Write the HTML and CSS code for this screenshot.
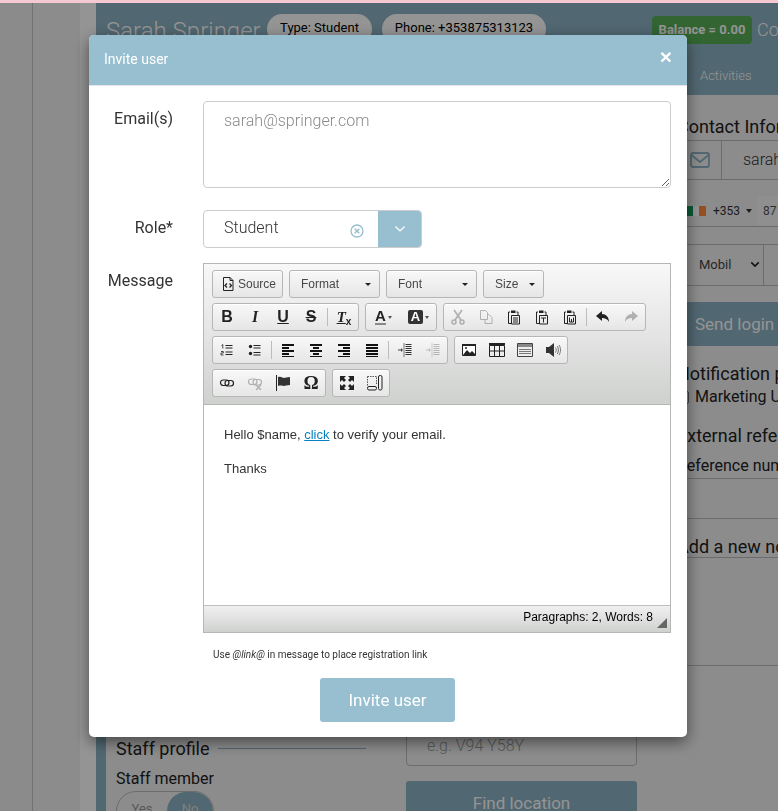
FILE: index.html
```html
<!DOCTYPE html>
<html lang="en">
<head>
<meta charset="utf-8">
<title>Invite user</title>
<link rel="stylesheet" href="styles.css">
</head>
<body>
<svg class="sprite" aria-hidden="true">
  <symbol id="i-source" viewBox="0 0 16 16"><path d="M3.5 1.5h6.5l3 3v10h-9.5z" fill="none" stroke="#222"/><path d="M10 1.5v3h3" fill="none" stroke="#222"/><path d="M7 7.5l-2 2 2 2M9.500 7.500l2 2-2 2" fill="none" stroke="#222" stroke-width="1.300"/></symbol>
  <symbol id="i-ol" viewBox="0 0 16 16"><path d="M2.500 3.500l1.300-1v4M2 9.500h2.300v1.500h-2.300v2h2.500" fill="none" stroke="#333" stroke-width=".9"/><path d="M6.500 3h7v1h-7zM6.500 5.500h7v1h-7zM6.500 9.500h7v1h-7zM6.500 12h7v1h-7z" fill="#222"/></symbol>
  <symbol id="i-ul" viewBox="0 0 16 16"><circle cx="3.500" cy="4.500" r="1.700" fill="#222"/><circle cx="3.500" cy="11.500" r="1.700" fill="#222"/><path d="M6.500 3h7v1h-7zM6.500 5.500h7v1h-7zM6.500 10h7v1h-7zM6.500 12.500h7v1h-7z" fill="#222"/></symbol>
  <symbol id="i-left" viewBox="0 0 16 16"><path d="M2 2h12v2h-12zM2 5h7v2h-7zM2 8h12v2h-12zM2 11h7v2h-7zM2 14h12v1h-12z" fill="#111"/></symbol>
  <symbol id="i-center" viewBox="0 0 16 16"><path d="M2 2h12v2h-12zM5 5h6v2h-6zM2 8h12v2h-12zM5 11h6v2h-6zM2 14h12v1h-12z" fill="#111"/></symbol>
  <symbol id="i-right" viewBox="0 0 16 16"><path d="M2 2h12v2h-12zM7 5h7v2h-7zM2 8h12v2h-12zM7 11h7v2h-7zM2 14h12v1h-12z" fill="#111"/></symbol>
  <symbol id="i-just" viewBox="0 0 16 16"><path d="M2 2h12v2h-12zM2 5h12v2h-12zM2 8h12v2h-12zM2 11h12v2h-12zM2 14h12v1h-12z" fill="#111"/></symbol>
  <symbol id="i-indent" viewBox="0 0 16 16"><path d="M8.500 2h6v1h-6zM8.500 4h6v1h-6zM8.500 6h6v1h-6zM8.500 8h6v1h-6zM8.500 10h6v1h-6zM8.500 12h6v1h-6z" fill="#333"/><path d="M6.500 1h1v14h-1z" fill="#777"/><path d="M1 7.500h3v-1.500l2 2-2 2v-1.500h-3z" fill="#444"/></symbol>
  <symbol id="i-cut" viewBox="0 0 16 16"><circle cx="4" cy="13" r="2" fill="none" stroke="#222" stroke-width="1.500"/><circle cx="12" cy="13" r="2" fill="none" stroke="#222" stroke-width="1.500"/><path d="M5 11l7-10M11 11l-7-10" stroke="#222" stroke-width="1.800" fill="none"/></symbol>
  <symbol id="i-copy" viewBox="0 0 16 16"><path d="M2.500 1.500h5l2 2v7h-7zM9.500 5.500h1.500l3 3v6h-7v-4" fill="none" stroke="#222"/></symbol>
  <symbol id="i-paste" viewBox="0 0 16 16"><path d="M4 3h-1.500v11.500h2.500M10.500 3h1.500v3" fill="none" stroke="#222"/><path d="M5 1.500h4.500v2.500h-4.500z" fill="#222"/><path d="M5.500 6.500h8v8.500h-8z" fill="none" stroke="#222"/><path d="M7 8.500h5v1h-5zM7 10.500h5v1h-5zM7 12.500h5v1h-5z" fill="#222"/></symbol>
  <symbol id="i-pastet" viewBox="0 0 16 16"><path d="M4 3h-1.500v11.500h2.500M10.500 3h1.500v3" fill="none" stroke="#222"/><path d="M5 1.500h4.500v2.500h-4.500z" fill="#222"/><path d="M5.500 6.500h8v8.500h-8z" fill="none" stroke="#222"/><path d="M7 8.500h5v1h-2v4h-1v-4h-2z" fill="#222"/></symbol>
  <symbol id="i-pastew" viewBox="0 0 16 16"><path d="M4 3h-1.500v11.500h2.500M10.500 3h1.500v3" fill="none" stroke="#222"/><path d="M5 1.500h4.500v2.500h-4.500z" fill="#222"/><path d="M5.500 6.500h8v8.500h-8z" fill="none" stroke="#222"/><path d="M7.500 8.500v4.500h4v-4.500M9.500 10v3" fill="none" stroke="#222"/></symbol>
  <symbol id="i-undo" viewBox="0 0 16 16"><path d="M1 7l6-5v3c4 0 7 3 7 8-1.500-3-4-4-7-4v3z" fill="#222"/></symbol>
  <symbol id="i-redo" viewBox="0 0 16 16"><path d="M15 7l-6-5v3c-4 0-7 3-7 8 1.500-3 4-4 7-4v3z" fill="#222"/></symbol>
  <symbol id="i-image" viewBox="0 0 16 16"><path d="M1.500 2.500h13v11h-13z" fill="#fff" stroke="#222"/><path d="M1 2h14v2h-14z" fill="#222"/><path d="M2 13l4-5 3 3 2-2 4 4z" fill="#222"/><circle cx="5" cy="6" r="1" fill="#222"/></symbol>
  <symbol id="i-table" viewBox="0 0 16 16"><path d="M0 1h16v2h-16z" fill="#222"/><path d="M.500 3.500h15v11h-15zM5.500 3.500v11M10.500 3.500v11M.500 9h15" fill="none" stroke="#222"/></symbol>
  <symbol id="i-tpl" viewBox="0 0 16 16"><path d="M.500 1.500h15v13h-15z" fill="#eee" stroke="#444"/><path d="M1 2h14v3h-14z" fill="#888"/><path d="M2 7h12v1h-12zM2 9h12v1h-12zM2 11h12v1h-12z" fill="#777"/></symbol>
  <symbol id="i-audio" viewBox="0 0 16 16"><path d="M1 5h3l5-4v14l-5-4h-3z" fill="#333"/><path d="M10.500 5.500c1 1.500 1 3.500 0 5M12.300 4c1.500 2.500 1.500 5.500 0 8M14 3c2 3 2 7 0 10" fill="none" stroke="#777"/></symbol>
  <symbol id="i-link" viewBox="0 0 16 16"><rect x="1.500" y="5" width="8.500" height="5.500" rx="2.700" fill="none" stroke="#222" stroke-width="1.200"/><rect x="6" y="5.500" width="8.500" height="5.500" rx="2.700" fill="none" stroke="#222" stroke-width="1.200"/></symbol>
  <symbol id="i-unlink" viewBox="0 0 16 16"><rect x="1.500" y="4" width="8.500" height="5.500" rx="2.700" fill="none" stroke="#222" stroke-width="1.200"/><rect x="6" y="4.500" width="8.500" height="5.500" rx="2.700" fill="none" stroke="#222" stroke-width="1.200"/><path d="M9 10l5 5M14 10l-5 5" stroke="#222" stroke-width="1.300"/></symbol>
  <symbol id="i-flag" viewBox="0 0 16 16"><path d="M1 0h1v16h-1z" fill="#222"/><path d="M3 2c3-1 5 1 6 1s3-1 6-1v8c-3 0-5 1-6 1s-3-1-6 0z" fill="#333"/></symbol>
  <symbol id="i-max" viewBox="0 0 16 16"><path d="M1 1h6l-2 2 2 2-2 2-2-2-2 2zM15 1v6l-2-2-2 2-2-2 2-2-2-2zM1 15v-6l2 2 2-2 2 2-2 2 2 2zM15 15h-6l2-2-2-2 2-2 2 2 2-2z" fill="#222"/></symbol>
  <symbol id="i-blocks" viewBox="0 0 16 16"><path d="M.500 1.500h9v8" fill="none" stroke="#555" stroke-dasharray="1.500 1"/><path d="M.500 1.500v9" fill="none" stroke="#555" stroke-dasharray="1.500 1"/><rect x=".500" y="11.500" width="9" height="3.500" rx="1.500" fill="none" stroke="#222"/><rect x="11.500" y=".500" width="3.500" height="14.500" rx="1.500" fill="none" stroke="#222"/></symbol>
</svg>

<div class="pinkbar"></div>
<div class="layout">
  <aside class="rail"></aside>
  <aside class="side"></aside>
  <aside class="gutter"></aside>
  <main class="main">
    <header class="head">
      <div class="head-top">
        <h1 class="name">Sarah Springer</h1>
        <span class="pill">Type: Student</span>
        <span class="pill pill-phone">Phone: +353875313123</span>
        <span class="balance">Balance = 0.00</span>
        <span class="co">Contact</span>
      </div>
      <nav class="tabs"><span>Activities</span></nav>
    </header>
    <section class="content">
      <div class="col col-a">
        <h2 class="h-line"><span>Staff profile</span><i class="rule"></i></h2>
        <div class="field-label">Staff member</div>
        <div class="toggle"><span class="yes">Yes</span><span class="no">No</span></div>
      </div>
      <div class="col col-b">
        <div class="bg-input">e.g. V94 Y58Y</div>
        <div class="bg-btn bg-btn-c">Find location</div>
      </div>
      <div class="col col-c">
        <h2 class="h3 h-contact">Contact Information</h2>
        <div class="mail-row">
          <span class="addon"><svg class="env" viewBox="0 0 20 16"><rect x="1" y="1" width="18" height="14" rx="2" fill="none" stroke="#8cb2c3" stroke-width="1.800"/><path d="M1.500 3l8.500 7 8.500-7" fill="none" stroke="#8cb2c3" stroke-width="1.800"/></svg></span>
          <span class="mail">sarah@springer.com</span>
        </div>
        <div class="phone-row">
          <span class="phone-code"><i class="flag"><b class="fg"></b><b class="fw"></b><b class="fo"></b></i>+353<i class="caret-bg"></i></span>
          <span class="phone-num">87</span>
        </div>
        <div class="mobile-row"><span class="mobil">Mobil</span><svg class="chev" viewBox="0 0 12 8"><path d="M1.500 1.500l4.500 4.500 4.500-4.500" fill="none" stroke="#222" stroke-width="2"/></svg></div>
        <div class="bg-btn bg-btn-send">Send login details</div>
        <h2 class="h3 h-notif">Notification preferences</h2>
        <div class="check-row"><i class="check"></i>Marketing Updates</div>
        <h2 class="h3 h-ext">External references</h2>
        <div class="ref-row">Reference number</div>
        <div class="blank-row"></div>
        <h2 class="h3 h-add">Add a new note</h2>
        <div class="tail-row"></div>
      </div>
    </section>
  </main>
</div>

<div class="overlay">
  <div class="modal">
    <div class="modal-head"><span class="modal-title">Invite user</span><span class="close">×</span></div>
    <form class="modal-body">
      <div class="form-row">
        <label class="lbl">Email(s)</label>
        <textarea class="ta" placeholder="sarah@springer.com"></textarea>
      </div>
      <div class="form-row row-role">
        <label class="lbl">Role*</label>
        <div class="select">
          <span class="select-val">Student</span>
          <svg class="clear" viewBox="0 0 14 14"><circle cx="7" cy="7" r="6" fill="none" stroke="#97bfcf" stroke-width="1.300"/><path d="M4.700 4.700l4.600 4.600M9.300 4.700l-4.600 4.600" stroke="#97bfcf" stroke-width="1.500"/></svg>
          <span class="select-arrow"><svg class="sel-chev" viewBox="0 0 12 8"><path d="M1.500 1.500l4.500 4.500 4.500-4.500" fill="none" stroke="#fff" stroke-width="1.200"/></svg></span>
        </div>
      </div>
      <div class="form-row row-msg">
        <label class="lbl">Message</label>
        <div class="editor">
          <div class="toolbar">
            <div class="tb-row">
              <a class="grp tb-source"><svg class="ic"><use href="#i-source"/></svg><span>Source</span></a>
              <a class="grp combo combo-format"><span>Format</span><i class="caret"></i></a>
              <a class="grp combo combo-font"><span>Font</span><i class="caret"></i></a>
              <a class="grp combo combo-size"><span>Size</span><i class="caret"></i></a>
            </div>
            <div class="tb-row">
              <div class="grp">
                <a class="btn"><span class="g g-b">B</span></a>
                <a class="btn"><span class="g g-i">I</span></a>
                <a class="btn"><span class="g g-u">U</span></a>
                <a class="btn"><span class="g g-s">S</span></a>
                <i class="sep"></i>
                <a class="btn"><span class="g g-tx"><span class="g-txt">T</span><small>x</small></span></a>
              </div>
              <div class="grp">
                <a class="btn btn-color"><span class="g g-a">A</span><i class="mini"></i></a>
                <a class="btn btn-color"><span class="g g-bg">A</span><i class="mini"></i></a>
              </div>
              <div class="grp">
                <a class="btn off"><svg class="ic"><use href="#i-cut"/></svg></a>
                <a class="btn off"><svg class="ic"><use href="#i-copy"/></svg></a>
                <a class="btn"><svg class="ic"><use href="#i-paste"/></svg></a>
                <a class="btn"><svg class="ic"><use href="#i-pastet"/></svg></a>
                <a class="btn"><svg class="ic"><use href="#i-pastew"/></svg></a>
                <i class="sep"></i>
                <a class="btn"><svg class="ic"><use href="#i-undo"/></svg></a>
                <a class="btn off"><svg class="ic"><use href="#i-redo"/></svg></a>
              </div>
            </div>
            <div class="tb-row">
              <div class="grp">
                <a class="btn"><svg class="ic"><use href="#i-ol"/></svg></a>
                <a class="btn"><svg class="ic"><use href="#i-ul"/></svg></a>
                <i class="sep"></i>
                <a class="btn"><svg class="ic"><use href="#i-left"/></svg></a>
                <a class="btn"><svg class="ic"><use href="#i-center"/></svg></a>
                <a class="btn"><svg class="ic"><use href="#i-right"/></svg></a>
                <a class="btn"><svg class="ic"><use href="#i-just"/></svg></a>
                <i class="sep"></i>
                <a class="btn"><svg class="ic"><use href="#i-indent"/></svg></a>
                <a class="btn off"><svg class="ic"><use href="#i-indent"/></svg></a>
              </div>
              <div class="grp">
                <a class="btn"><svg class="ic"><use href="#i-image"/></svg></a>
                <a class="btn"><svg class="ic"><use href="#i-table"/></svg></a>
                <a class="btn"><svg class="ic"><use href="#i-tpl"/></svg></a>
                <a class="btn"><svg class="ic"><use href="#i-audio"/></svg></a>
              </div>
            </div>
            <div class="tb-row">
              <div class="grp">
                <a class="btn"><svg class="ic"><use href="#i-link"/></svg></a>
                <a class="btn off"><svg class="ic"><use href="#i-unlink"/></svg></a>
                <a class="btn"><svg class="ic"><use href="#i-flag"/></svg></a>
                <a class="btn"><span class="g g-o">Ω</span></a>
              </div>
              <div class="grp">
                <a class="btn"><svg class="ic"><use href="#i-max"/></svg></a>
                <a class="btn"><svg class="ic"><use href="#i-blocks"/></svg></a>
              </div>
            </div>
          </div>
          <div class="ed-content">
            <p>Hello $name, <a class="ed-link">click</a> to verify your email.</p>
            <p>Thanks</p>
          </div>
          <div class="ed-status"><span>Paragraphs: 2, Words: 8</span><i class="resizer"></i></div>
        </div>
      </div>
      <p class="note">Use <em>@link@</em> in message to place registration link</p>
      <div class="actions"><button class="submit" type="button">Invite user</button></div>
    </form>
  </div>
</div>
</body>
</html>
```

FILE: styles.css
```css
* { box-sizing: border-box; }
html, body { margin: 0; height: 100%; }
body { font-family: Roboto, "Liberation Sans", sans-serif; color: #222; background: #fff; overflow: hidden; width: 778px; height: 811px; }
.sprite { display: none; }

.pinkbar { height: 3px; background: #f6c8d2; position: relative; z-index: 5; }
.layout { display: flex; height: 808px; overflow: hidden; }
.rail { width: 33px; flex: none; background: #efefef; border-right: 1px solid #c4c4c4; }
.side { width: 47px; flex: none; background: #f1f1f1; }
.gutter { width: 16px; flex: none; background: #fff; }
.main { flex: 1; min-width: 0; overflow: hidden; background: #f1f1f1; }

.head { height: 92px; background: #8cb2c3; padding: 11px 0 0 10px; white-space: nowrap; overflow: hidden; display: flex; flex-direction: column; }
.head-top { display: flex; align-items: center; height: 30px; }
.name { margin: 4px 6px 0 0; font-size: 24px; font-weight: 300; color: #fff; width: 155px; flex: none; }
.pill { flex: none; width: 105px; height: 30px; line-height: 28px; text-align: center; background: #fff; border-radius: 15px; font-size: 13px; color: #000; }
.pill-phone { width: 164px; margin-left: 10px; }
.balance { flex: none; margin: 2px 0 0 106px; width: 100px; height: 28px; line-height: 28px; text-align: center; background: #56ae56; border-radius: 4px; color: #fff; font-size: 13px; font-weight: 700; }
.co { margin-left: 5px; color: #fff; font-size: 18px; font-weight: 300; }
.tabs { margin-top: 24px; padding-left: 594px; font-size: 13px; font-weight: 300; color: #fff; line-height: 16px; }

.content { border-left: 10px solid #8cb2c3; padding-left: 10px; display: grid; grid-template-columns: 250px 231px 300px; column-gap: 40px; height: 720px; }
.col { min-width: 0; white-space: nowrap; }
.h-line { display: flex; align-items: center; margin: 644px 0 0; font-size: 18px; line-height: 20px; font-weight: 400; }
.rule { flex: 1; height: 1px; background: #8cb2c3; margin: 0 0 2px 8px; }
.field-label { margin-top: 10px; font-size: 16px; line-height: 20px; }
.toggle { margin-top: 2px; width: 98px; height: 40px; border: 1px solid #bbb; border-radius: 20px; display: flex; overflow: hidden; font-size: 13px; }
.yes { width: 50px; text-align: center; line-height: 34px; color: #999; }
.no { flex: 1; text-align: center; line-height: 34px; background: #8cb2c3; color: #ddd; border-radius: 20px; }
.bg-input { margin-top: 631px; height: 40px; border: 1px solid #bbb; border-radius: 4px; padding: 0 20px; line-height: 38px; font-size: 16px; font-weight: 300; color: #999; }
.bg-btn { height: 44px; line-height: 44px; background: #8cb2c3; color: #fff; font-size: 17px; border-radius: 3px; }
.bg-btn-c { margin-top: 15px; text-align: center; }

.h3 { margin: 0; font-size: 18px; line-height: 20px; font-weight: 400; }
.h-contact { margin-top: 22px; }
.mail-row { margin-top: 3px; height: 40px; display: flex; border-top: 1px solid #bbb; border-bottom: 1px solid #bbb; }
.addon { width: 45px; flex: none; border-right: 1px solid #bbb; display: flex; align-items: center; padding-left: 13px; }
.env { width: 20px; height: 16px; }
.mail { padding-left: 21px; font-size: 16px; font-weight: 300; line-height: 38px; color: #333; }
.phone-row { margin-top: 16px; height: 31px; display: flex; border-bottom: 1px solid #bbb; font-size: 12px; line-height: 30px; }
.phone-code { width: 81px; flex: none; display: flex; align-items: center; background: #f1f1f1; color: #333; }
.flag { display: flex; width: 20px; height: 10px; margin: 0 7px 0 9px; }
.flag b { flex: 1; }
.fg { background: #169b62; } .fw { background: #fff; } .fo { background: #ff883e; }
.caret-bg { width: 0; height: 0; margin-left: 6px; border: 3px solid transparent; border-top: 4px solid #333; border-bottom: 0; }
.phone-num { padding-left: 5px; color: #555; background: #f6f6f6; flex: 1; }
.mobile-row { margin-top: 17px; height: 42px; border-top: 1px solid #bbb; border-bottom: 1px solid #bbb; display: flex; align-items: center; padding: 0 0 2px 22px; font-size: 13px; background: linear-gradient(to right, #f1f1f1 86px, #bbb 86px, #bbb 87px, #f1f1f1 87px); }
.mobil { width: 50px; color: #444; }
.chev { width: 10px; height: 7px; margin-left: 1px; }
.bg-btn-send { margin-top: 16px; padding-left: 18px; border-radius: 0; }
.h-notif { margin-top: 18px; }
.check-row { margin-top: 3px; height: 20px; line-height: 20px; font-size: 16px; display: flex; align-items: center; }
.check { width: 12px; height: 13px; border: 1px solid #777; border-radius: 2px; margin: 0 6px 0 0; }
.h-ext { margin-top: 19px; }
.ref-row { margin-top: 10px; height: 23px; line-height: 20px; font-size: 16px; border-bottom: 1px solid #bbb; }
.blank-row { height: 40px; border-bottom: 1px solid #bbb; }
.h-add { margin-top: 18px; height: 21px; border-bottom: 1px solid #bbb; }
.tail-row { height: 108px; border-bottom: 1px solid #bbb; }

.overlay { position: fixed; inset: 3px 0 0 0; background: rgba(0, 0, 0, .42); z-index: 3; }
.modal { margin: 32px 0 0 89px; width: 598px; height: 702px; background: #fff; border-radius: 5px; box-shadow: 0 5px 15px rgba(0, 0, 0, .5); overflow: hidden; }
.modal-head { height: 51px; background: #97bfcf; display: flex; align-items: center; justify-content: space-between; padding: 0 15px 3px; color: #fff; border-bottom: 1px solid #e5e5e5; }
.modal-title { font-size: 14px; }
.close { font-family: "Liberation Sans", sans-serif; font-size: 21px; font-weight: 700; line-height: 1; position: relative; top: -2px; }
.modal-body { margin: 0; padding: 15px 16px 0 15px; }
.form-row { display: grid; grid-template-columns: 69px 468px; column-gap: 30px; }
.lbl { font-size: 16px; line-height: 20px; text-align: right; color: #333; padding-top: 8px; white-space: nowrap; justify-self: end; }
.ta { display: block; width: 468px; height: 87px; border: 1px solid #ccc; border-radius: 4px; padding: 9px 20px; font-family: Roboto, sans-serif; font-size: 16px; font-weight: 300; line-height: 20px; outline: 0; }
.ta::placeholder { color: #8a8a8a; opacity: 1; }
.row-role { margin-top: 22px; }
.select { width: 219px; height: 38px; border: 1px solid #ccc; border-radius: 4px; display: flex; align-items: center; padding-left: 20px; overflow: hidden; }
.select-val { flex: 1; font-size: 16px; font-weight: 300; color: #333; margin-bottom: 4px; }
.clear { width: 14px; height: 14px; flex: none; margin: 4px 14px 0 0; }
.select-arrow { flex: none; width: 44px; height: 38px; background: #97bfcf; display: flex; align-items: center; justify-content: center; margin-right: -1px; }
.sel-chev { width: 12px; height: 8px; }
.row-msg { margin-top: 15px; }

.editor { width: 468px; height: 370px; border: 1px solid #b6b6b6; display: flex; flex-direction: column; font-family: "Liberation Sans", Arial, sans-serif; font-size: 12px; color: #484848; }
.toolbar { height: 141px; flex: none; padding: 6px 8px 0; background: linear-gradient(to bottom, #f8f8f8, #cfd1cf); border-bottom: 1px solid #b6b6b6; }
.tb-row { display: flex; gap: 6px; height: 28px; margin-bottom: 5px; }
.grp { display: flex; align-items: center; border: 1px solid #b6b6b6; border-radius: 3px; background: linear-gradient(to bottom, #f8f8f8, #e6e6e6); box-shadow: inset 0 1px 0 #fff; }
.tb-source { width: 71px; padding-left: 7px; gap: 2px; }
.tb-source .ic { flex: none; }
.combo { padding: 0 11px; justify-content: space-between; }
.combo-format { width: 91px; }
.combo-font { width: 91px; }
.combo-size { width: 61px; }
.caret { width: 0; height: 0; border: 3px solid transparent; border-top: 3px solid #222; border-bottom: 0; margin-right: -3px; }
.btn { width: 28px; height: 26px; display: flex; align-items: center; justify-content: center; color: #222; flex: none; }
.btn-color { width: 35px; }
.off { opacity: .3; }
.sep { width: 1px; height: 18px; margin: 0 2px; background: #bcbcbc; flex: none; }
.ic { width: 16px; height: 16px; display: block; }
.g { font-size: 16px; line-height: 16px; color: #222; font-family: "Liberation Sans", sans-serif; font-weight: 700; display: block; }
.g-i { font-family: "Liberation Serif", serif; font-style: italic; }
.g-u { text-decoration: underline; }
.g-s { text-decoration: line-through; }
.g-tx { display: flex; align-items: flex-end; }
.g-txt { font-family: "Liberation Serif", serif; font-style: italic; font-size: 15px; text-decoration: underline; }
.g-tx small { font-size: 10px; line-height: 10px; margin-bottom: -2px; }
.g-a { border-bottom: 2px solid #888; line-height: 14px; font-size: 15px; }
.g-bg { background: #333; color: #fff; border-radius: 2px; width: 15px; height: 14px; line-height: 14px; text-align: center; font-size: 13px; }
.g-o { font-family: "Liberation Serif", serif; font-size: 19px; }
.mini { width: 0; height: 0; margin-left: 2px; border: 2.500px solid transparent; border-top: 3px solid #555; border-bottom: 0; }
.ed-content { height: 200px; flex: none; background: #fff; padding: 20px 20px 0; color: #333; font-size: 13px; line-height: 19.200px; }
.ed-content p { margin: 0 0 14.400px; }
.ed-link { color: #0782c1; text-decoration: underline; }
.ed-status { flex: 1; border-top: 1px solid #bfbfbf; background: linear-gradient(to bottom, #f0f0f0, #cfd1cf); display: flex; justify-content: flex-end; align-items: flex-start; color: #000; line-height: 22px; padding-right: 3px; }
.resizer { width: 0; height: 0; margin: 12px 0 0 4px; border-style: solid; border-width: 0 0 10px 10px; border-color: transparent transparent #666 transparent; }

.note { margin: 15px 0 0 109px; font-size: 10px; line-height: 14px; color: #333; }
.actions { margin-top: 16px; display: flex; justify-content: center; }
.submit { width: 135px; height: 44px; border: 0; border-radius: 3px; background: #97bfcf; color: #fff; font-family: Roboto, sans-serif; font-size: 17px; }
```
